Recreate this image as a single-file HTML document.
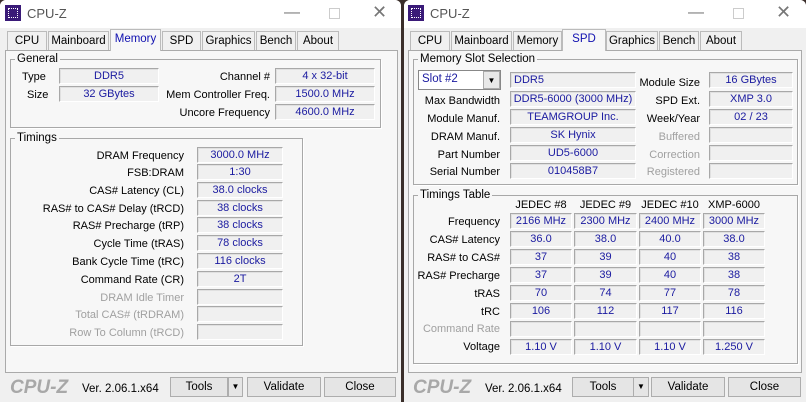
<!DOCTYPE html>
<html><head><meta charset="utf-8"><style>
*{box-sizing:border-box;margin:0;padding:0}
body{width:806px;height:402px;background:#3a2e2a;position:relative;overflow:hidden;font-family:"Liberation Sans",sans-serif;font-size:11px;color:#000}
.win{position:absolute;top:0;width:401px;height:402px;background:#f0f0f0;border-radius:6px 6px 0 0;overflow:hidden}
.title{position:absolute;left:0;top:0;width:100%;height:28px;background:#fff}
.ico{position:absolute;left:5px;top:5px;width:16px;height:16px;background:#3a1a78}
.ico:after{content:"";position:absolute;left:3px;top:3px;width:8px;height:8px;border:1px dotted #fff}
.tt{position:absolute;left:27px;top:6px;font-size:13px;color:#555}
.wb{position:absolute;top:4px;color:#777;font-size:16px}
.abs{position:absolute}
.tab{position:absolute;top:31px;height:20px;border:1px solid #bbb;border-bottom:none;background:#f0f0f0;text-align:center;line-height:18px;font-size:11.5px;white-space:nowrap}
.tab.sel{top:29px;height:22px;background:#f7f7f7;color:#1010b0;z-index:2}
.panel{position:absolute;left:5px;top:50px;width:393px;height:323px;border:1px solid #aaa;background:#f7f7f7}
.grp{position:absolute;border:1px solid #a8a8a8;box-shadow:1px 1px 0 #fff}
.gl{position:absolute;background:#f7f7f7;padding:0 2px;font-size:11.5px;line-height:13px}
.b{position:absolute;height:16px;border:1px solid;border-color:#a8a8a8 #fff #fff #a8a8a8;box-shadow:inset 1px 1px 0 #e0e0e0;text-align:center;color:#1a1aa0;font-size:11px;line-height:14px;background:#f0f0f0;white-space:nowrap;overflow:hidden}
.l{position:absolute;text-align:right;font-size:11px;line-height:14px;white-space:nowrap}
.d{color:#a0a0a0}
.btn{position:absolute;top:377px;height:20px;border:1px solid #adadad;background:#e5e5e5;text-align:center;line-height:18px;font-size:11.5px}
.logo{position:absolute;left:10px;top:377px;font-size:19px;font-weight:bold;font-style:italic;color:#a8a8a8}
.ver{position:absolute;left:82px;top:383px;font-size:11.5px}
</style></head><body>

<!-- LEFT WINDOW -->
<div class="win" style="left:0">
<div class="title"><div class="ico"></div><div class="tt">CPU-Z</div>
<div class="wb" style="left:284px">&#8212;</div><div class="abs" style="left:329px;top:8px;width:11px;height:11px;border:1px solid #ccc"></div><div class="wb" style="left:372px;top:2px;font-size:18px">&#10005;</div></div>
<div class="tab" style="left:7px;width:40px">CPU</div>
<div class="tab" style="left:48px;width:61px">Mainboard</div>
<div class="tab sel" style="left:110px;width:51px">Memory</div>
<div class="tab" style="left:162px;width:39px">SPD</div>
<div class="tab" style="left:202px;width:53px">Graphics</div>
<div class="tab" style="left:256px;width:40px">Bench</div>
<div class="tab" style="left:297px;width:42px">About</div>
<div class="panel"></div>
<div class="grp" style="left:10px;top:59px;width:371px;height:69px"></div><div class="gl" style="left:15px;top:53px">General</div>
<div class="l" style="left:22px;top:70px">Type</div><div class="b" style="left:59px;top:68px;width:100px">DDR5</div>
<div class="l" style="left:27px;top:88px">Size</div><div class="b" style="left:59px;top:86px;width:100px">32 GBytes</div>
<div class="l" style="right:131px;top:70px">Channel #</div><div class="b" style="left:275px;top:68px;width:100px">4 x 32-bit</div>
<div class="l" style="right:131px;top:88px">Mem Controller Freq.</div><div class="b" style="left:275px;top:86px;width:100px">1500.0 MHz</div>
<div class="l" style="right:131px;top:106px">Uncore Frequency</div><div class="b" style="left:275px;top:104px;width:100px">4600.0 MHz</div>

<div class="grp" style="left:10px;top:138px;width:293px;height:208px"></div><div class="gl" style="left:15px;top:132px">Timings</div>
<div class="l" style="right:217px;top:149px">DRAM Frequency</div><div class="b" style="left:197px;top:147px;width:86px">3000.0 MHz</div>
<div class="l" style="right:217px;top:166px">FSB:DRAM</div><div class="b" style="left:197px;top:164px;width:86px">1:30</div>
<div class="l" style="right:217px;top:184px">CAS# Latency (CL)</div><div class="b" style="left:197px;top:182px;width:86px">38.0 clocks</div>
<div class="l" style="right:217px;top:202px">RAS# to CAS# Delay (tRCD)</div><div class="b" style="left:197px;top:200px;width:86px">38 clocks</div>
<div class="l" style="right:217px;top:219px">RAS# Precharge (tRP)</div><div class="b" style="left:197px;top:217px;width:86px">38 clocks</div>
<div class="l" style="right:217px;top:237px">Cycle Time (tRAS)</div><div class="b" style="left:197px;top:235px;width:86px">78 clocks</div>
<div class="l" style="right:217px;top:255px">Bank Cycle Time (tRC)</div><div class="b" style="left:197px;top:253px;width:86px">116 clocks</div>
<div class="l" style="right:217px;top:273px">Command Rate (CR)</div><div class="b" style="left:197px;top:271px;width:86px">2T</div>
<div class="l d" style="right:217px;top:291px">DRAM Idle Timer</div><div class="b" style="left:197px;top:289px;width:86px"></div>
<div class="l d" style="right:217px;top:308px">Total CAS# (tRDRAM)</div><div class="b" style="left:197px;top:306px;width:86px"></div>
<div class="l d" style="right:217px;top:326px">Row To Column (tRCD)</div><div class="b" style="left:197px;top:324px;width:86px"></div>

<div class="logo">CPU-Z</div><div class="ver">Ver. 2.06.1.x64</div>
<div class="btn" style="left:170px;width:58px">Tools</div><div class="btn" style="left:228px;width:15px;font-size:8px">&#9660;</div>
<div class="btn" style="left:247px;width:74px">Validate</div>
<div class="btn" style="left:324px;width:72px">Close</div>
</div>

<!-- RIGHT WINDOW -->
<div class="win" style="left:404px;width:402px">
<div class="title"><div class="ico" style="left:4px"></div><div class="tt" style="left:26px">CPU-Z</div>
<div class="wb" style="left:284px">&#8212;</div><div class="abs" style="left:329px;top:8px;width:11px;height:11px;border:1px solid #ccc"></div><div class="wb" style="left:372px;top:2px;font-size:18px">&#10005;</div></div>
<div class="tab" style="left:6px;width:40px">CPU</div>
<div class="tab" style="left:47px;width:61px">Mainboard</div>
<div class="tab" style="left:109px;width:49px">Memory</div>
<div class="tab sel" style="left:158px;width:44px">SPD</div>
<div class="tab" style="left:202px;width:52px">Graphics</div>
<div class="tab" style="left:255px;width:40px">Bench</div>
<div class="tab" style="left:296px;width:42px">About</div>
<div class="panel" style="left:4px;width:394px"></div>
<div class="grp" style="left:9px;top:59px;width:385px;height:126px"></div><div class="gl" style="left:14px;top:53px">Memory Slot Selection</div>
<div class="abs" style="left:14px;top:70px;width:83px;height:20px;border:1px solid #888;background:#fff;color:#1a1aa0;padding:2px 3px;font-size:11.5px">Slot #2</div>
<div class="abs" style="left:79px;top:71px;width:17px;height:18px;border:1px solid #aaa;background:#e8e8e8;font-size:8px;text-align:center;line-height:17px">&#9660;</div>
<div class="b" style="left:106px;top:72px;width:126px;text-align:left;padding-left:3px">DDR5</div>
<div class="l" style="right:106px;top:76px">Module Size</div><div class="b" style="left:305px;top:72px;width:84px">16 GBytes</div>
<div class="l" style="right:306px;top:94px">Max Bandwidth</div><div class="b" style="left:106px;top:91px;width:126px">DDR5-6000 (3000 MHz)</div>
<div class="l" style="right:106px;top:94px">SPD Ext.</div><div class="b" style="left:305px;top:91px;width:84px">XMP 3.0</div>
<div class="l" style="right:306px;top:112px">Module Manuf.</div><div class="b" style="left:106px;top:109px;width:126px">TEAMGROUP Inc.</div>
<div class="l" style="right:106px;top:112px">Week/Year</div><div class="b" style="left:305px;top:109px;width:84px">02 / 23</div>
<div class="l" style="right:306px;top:130px">DRAM Manuf.</div><div class="b" style="left:106px;top:127px;width:126px">SK Hynix</div>
<div class="l d" style="right:106px;top:130px">Buffered</div><div class="b" style="left:305px;top:127px;width:84px"></div>
<div class="l" style="right:306px;top:148px">Part Number</div><div class="b" style="left:106px;top:145px;width:126px">UD5-6000</div>
<div class="l d" style="right:106px;top:148px">Correction</div><div class="b" style="left:305px;top:145px;width:84px"></div>
<div class="l" style="right:306px;top:165px">Serial Number</div><div class="b" style="left:106px;top:163px;width:126px">010458B7</div>
<div class="l d" style="right:106px;top:165px">Registered</div><div class="b" style="left:305px;top:163px;width:84px"></div>

<div class="grp" style="left:9px;top:195px;width:385px;height:169px"></div><div class="gl" style="left:14px;top:189px">Timings Table</div>
<div class="l" style="left:106px;width:62px;text-align:center;top:198px">JEDEC #8</div>
<div class="l" style="left:170px;width:63px;text-align:center;top:198px">JEDEC #9</div>
<div class="l" style="left:235px;width:62px;text-align:center;top:198px">JEDEC #10</div>
<div class="l" style="left:299px;width:62px;text-align:center;top:198px">XMP-6000</div>

<div class="l" style="right:306px;top:215px">Frequency</div>
<div class="b" style="left:106px;top:213px;width:62px">2166 MHz</div><div class="b" style="left:170px;top:213px;width:63px">2300 MHz</div><div class="b" style="left:235px;top:213px;width:62px">2400 MHz</div><div class="b" style="left:299px;top:213px;width:62px">3000 MHz</div>
<div class="l" style="right:306px;top:233px">CAS# Latency</div>
<div class="b" style="left:106px;top:231px;width:62px">36.0</div><div class="b" style="left:170px;top:231px;width:63px">38.0</div><div class="b" style="left:235px;top:231px;width:62px">40.0</div><div class="b" style="left:299px;top:231px;width:62px">38.0</div>
<div class="l" style="right:306px;top:251px">RAS# to CAS#</div>
<div class="b" style="left:106px;top:249px;width:62px">37</div><div class="b" style="left:170px;top:249px;width:63px">39</div><div class="b" style="left:235px;top:249px;width:62px">40</div><div class="b" style="left:299px;top:249px;width:62px">38</div>
<div class="l" style="right:306px;top:269px">RAS# Precharge</div>
<div class="b" style="left:106px;top:267px;width:62px">37</div><div class="b" style="left:170px;top:267px;width:63px">39</div><div class="b" style="left:235px;top:267px;width:62px">40</div><div class="b" style="left:299px;top:267px;width:62px">38</div>
<div class="l" style="right:306px;top:287px">tRAS</div>
<div class="b" style="left:106px;top:285px;width:62px">70</div><div class="b" style="left:170px;top:285px;width:63px">74</div><div class="b" style="left:235px;top:285px;width:62px">77</div><div class="b" style="left:299px;top:285px;width:62px">78</div>
<div class="l" style="right:306px;top:305px">tRC</div>
<div class="b" style="left:106px;top:303px;width:62px">106</div><div class="b" style="left:170px;top:303px;width:63px">112</div><div class="b" style="left:235px;top:303px;width:62px">117</div><div class="b" style="left:299px;top:303px;width:62px">116</div>
<div class="l d" style="right:306px;top:322px">Command Rate</div>
<div class="b" style="left:106px;top:321px;width:62px"></div><div class="b" style="left:170px;top:321px;width:63px"></div><div class="b" style="left:235px;top:321px;width:62px"></div><div class="b" style="left:299px;top:321px;width:62px"></div>
<div class="l" style="right:306px;top:340px">Voltage</div>
<div class="b" style="left:106px;top:339px;width:62px">1.10 V</div><div class="b" style="left:170px;top:339px;width:63px">1.10 V</div><div class="b" style="left:235px;top:339px;width:62px">1.10 V</div><div class="b" style="left:299px;top:339px;width:62px">1.250 V</div>

<div class="logo" style="left:9px">CPU-Z</div><div class="ver" style="left:81px">Ver. 2.06.1.x64</div>
<div class="btn" style="left:168px;width:62px">Tools</div><div class="btn" style="left:229px;width:16px;font-size:8px">&#9660;</div>
<div class="btn" style="left:247px;width:74px">Validate</div>
<div class="btn" style="left:324px;width:73px">Close</div>
</div>
</body></html>
